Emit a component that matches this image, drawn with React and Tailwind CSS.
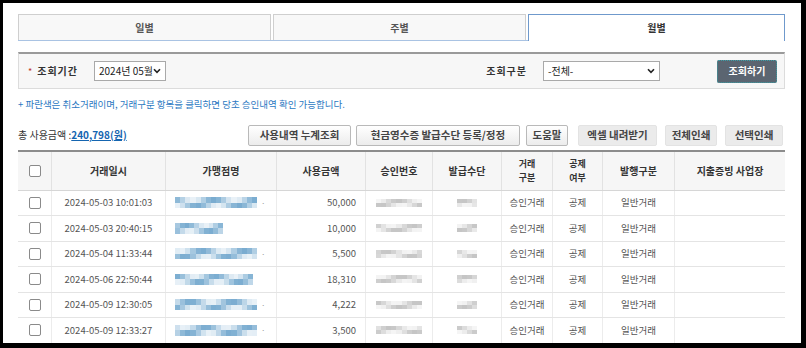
import React from 'react';

const FONT = "font-['Noto_Sans_CJK_KR','Noto_Sans',sans-serif]";

const rows = [
  { date: '2024-05-03 10:01:03', amount: '50,000', shop: 82, dot: true, seed: 1 },
  { date: '2024-05-03 20:40:15', amount: '10,000', shop: 48, dot: false, seed: 2 },
  { date: '2024-05-04 11:33:44', amount: '5,500', shop: 82, dot: true, seed: 3 },
  { date: '2024-05-06 22:50:44', amount: '18,310', shop: 78, dot: false, seed: 4 },
  { date: '2024-05-09 12:30:05', amount: '4,222', shop: 82, dot: true, seed: 5 },
  { date: '2024-05-09 12:33:27', amount: '3,500', shop: 82, dot: true, seed: 6 },
  { date: '', amount: '', shop: 0, dot: false, seed: 7 },
];

// pixelated blur blocks (the reference masks these values)
function Mosaic({ width, height, seed, tone }) {
  const cols = Math.max(1, Math.round(width / 5));
  const cells = [];
  for (let r = 0; r < 2; r++) {
    for (let c = 0; c < cols; c++) {
      const v = Math.abs(Math.sin(seed * 13.7 + c * 5.9 + r * 11.3));
      const a = 0.12 + v * v * 0.6;
      const color =
        tone === 'blue' ? `rgba(70,140,190,${a})` : `rgba(120,120,120,${a * 0.6})`;
      cells.push(<div key={r + '-' + c} style={{ background: color }} />);
    }
  }
  return (
    <div
      className="grid blur-[0.4px]"
      style={{
        width,
        height,
        gridTemplateColumns: `repeat(${cols}, 1fr)`,
        gridTemplateRows: 'repeat(2, 1fr)',
      }}
    >
      {cells}
    </div>
  );
}

function Checkbox() {
  return <div className="w-[12px] h-[12px] rounded-[2px] border border-[#8a8a8a] bg-white" />;
}

const W = [34, 114, 111, 89, 67, 69, 51, 50, 72, 110];

export default function App() {
  return (
    <div className={`w-[806px] h-[348px] bg-black pt-[3px] pl-[3px] ${FONT}`}>
      <div className="w-[798px] h-[340px] bg-white overflow-hidden pl-[15px] pt-[11px]">
        <div className="w-[767px]">
          {/* tabs */}
          <div className="flex h-[27px] border-b border-[#a9c3e3] text-[10px] leading-none">
            <div className="w-[253px] flex items-center justify-center bg-[#f8f8f8] border border-b-0 border-[#cfcfcf] text-[#555] font-bold">
              일별
            </div>
            <div className="w-[253px] ml-[2px] flex items-center justify-center bg-[#f8f8f8] border border-b-0 border-[#cfcfcf] text-[#555] font-bold">
              주별
            </div>
            <div className="w-[257px] ml-[2px] -mb-px flex items-center justify-center bg-white border border-b-0 border-[#6f99cc] text-[#333] font-bold">
              월별
            </div>
          </div>

          {/* search box */}
          <div className="mt-[11px] h-[37px] bg-[#f7f7f7] border-t-2 border-t-[#9a9a9a] border-x border-b border-[#dcdcdc] flex items-center text-[10px] leading-none">
            <span className="ml-[9px] text-[#c0392b] text-[9px]">*</span>
            <span className="ml-[5px] font-bold text-[#333] tracking-[1px]">조회기간</span>
            <div className="ml-[16px] w-[72px] h-[20px] bg-white border border-[#a9a9a9] flex items-center justify-between px-[4px] text-[#222]">
              <span>2024년 05월</span>
              <Chevron />
            </div>
            <span className="ml-auto font-bold text-[#333] tracking-[1px]">조회구분</span>
            <div className="ml-[16px] w-[117px] h-[20px] bg-white border border-[#a9a9a9] flex items-center justify-between px-[4px] text-[#222]">
              <span>-전체-</span>
              <Chevron />
            </div>
            <div className="ml-[57px] mr-[7px] w-[60px] h-[23px] bg-[#5b6571] outline outline-1 outline-dotted outline-[#3aa0a8] outline-offset-[-1px] rounded-[2px] flex items-center justify-center text-white font-bold text-[10px]">
              조회하기
            </div>
          </div>

          {/* note */}
          <p className="mt-[11px] text-[9.5px] leading-none text-[#2b78c2]">
            + 파란색은 취소거래이며, 거래구분 항목을 클릭하면 당초 승인내역 확인 가능합니다.
          </p>

          {/* total + buttons */}
          <div className="mt-[15px] flex items-center h-[21px] text-[10px] leading-none">
            <span className="text-[#333]">총 사용금액 :</span>
            <span className="text-[#1565b0] font-bold underline">240,798(원)</span>
            <Btn w={103} cls="ml-auto" light>사용내역 누계조회</Btn>
            <Btn w={164} cls="ml-[5px]" light>현금영수증 발급수단 등록/정정</Btn>
            <Btn w={42} cls="ml-[6px]" light>도움말</Btn>
            <Btn w={79} cls="ml-[10px]">엑셀 내려받기</Btn>
            <Btn w={52} cls="ml-[8px]">전체인쇄</Btn>
            <Btn w={58} cls="ml-[8px] mr-[2px]">선택인쇄</Btn>
          </div>

          {/* table */}
          <div className="mt-[4px] border-t-2 border-[#8c8c8c]">
            <div className="flex h-[39px] bg-[#f6f6f6] border-b border-[#d6d6d6] text-[10px] leading-none font-bold text-[#333]">
              <HCell w={W[0]}><Checkbox /></HCell>
              <HCell w={W[1]}>거래일시</HCell>
              <HCell w={W[2]}>가맹점명</HCell>
              <HCell w={W[3]}>사용금액</HCell>
              <HCell w={W[4]}>승인번호</HCell>
              <HCell w={W[5]}>발급수단</HCell>
              <HCell w={W[6]}><TwoLine a="거래" b="구분" /></HCell>
              <HCell w={W[7]}><TwoLine a="공제" b="여부" /></HCell>
              <HCell w={W[8]}>발행구분</HCell>
              <HCell w={W[9]} last>지출증빙 사업장</HCell>
            </div>
            {rows.map((r, i) => (
              <div key={i} className="flex h-[25.5px] border-b border-[#e4e4e4] text-[9.5px] leading-none text-[#555]">
                <Cell w={W[0]}>{r.date && <Checkbox />}</Cell>
                <Cell w={W[1]}>{r.date}</Cell>
                <Cell w={W[2]} cls="justify-start pl-[9px]">
                  {r.shop > 0 && (
                    <>
                      <Mosaic width={r.shop} height={11} seed={r.seed} tone="blue" />
                      {r.dot && <span className="ml-[4px] text-[#999] text-[8px]">·</span>}
                    </>
                  )}
                </Cell>
                <Cell w={W[3]} cls="justify-end pr-[9px]">{r.amount}</Cell>
                <Cell w={W[4]}>{r.date && <Mosaic width={46} height={8} seed={r.seed + 10} tone="gray" />}</Cell>
                <Cell w={W[5]}>{r.date && <Mosaic width={20} height={8} seed={r.seed + 20} tone="gray" />}</Cell>
                <Cell w={W[6]}>{r.date && '승인거래'}</Cell>
                <Cell w={W[7]}>{r.date && '공제'}</Cell>
                <Cell w={W[8]}>{r.date && '일반거래'}</Cell>
                <Cell w={W[9]} last />
              </div>
            ))}
          </div>
        </div>
      </div>
    </div>
  );
}

function TwoLine({ a, b }) {
  return (
    <div className="flex flex-col items-center gap-[4.5px] text-[9px]">
      <span>{a}</span>
      <span>{b}</span>
    </div>
  );
}

function HCell({ w, children, last }) {
  return (
    <div
      style={{ width: w }}
      className={`flex items-center justify-center shrink-0 ${last ? '' : 'border-r border-[#e2e2e2]'}`}
    >
      {children}
    </div>
  );
}

function Cell({ w, children, cls = 'justify-center', last }) {
  return (
    <div
      style={{ width: w }}
      className={`flex items-center shrink-0 ${cls} ${last ? '' : 'border-r border-[#ececec]'}`}
    >
      {children}
    </div>
  );
}

function Btn({ w, cls, light, children }) {
  return (
    <div
      style={{ width: w }}
      className={`h-[21px] flex items-center justify-center font-bold text-[#444] text-[10.5px] rounded-[2px] ${cls} ${
        light
          ? 'bg-gradient-to-b from-white to-[#ececec] border border-[#b9b9b9]'
          : 'bg-[#ebebeb] border border-[#e3e3e3]'
      }`}
    >
      {children}
    </div>
  );
}

function Chevron() {
  return (
    <svg width="8" height="6" viewBox="0 0 8 6">
      <path d="M1 1.2 L4 4.4 L7 1.2" stroke="#222" strokeWidth="1.6" fill="none" />
    </svg>
  );
}
